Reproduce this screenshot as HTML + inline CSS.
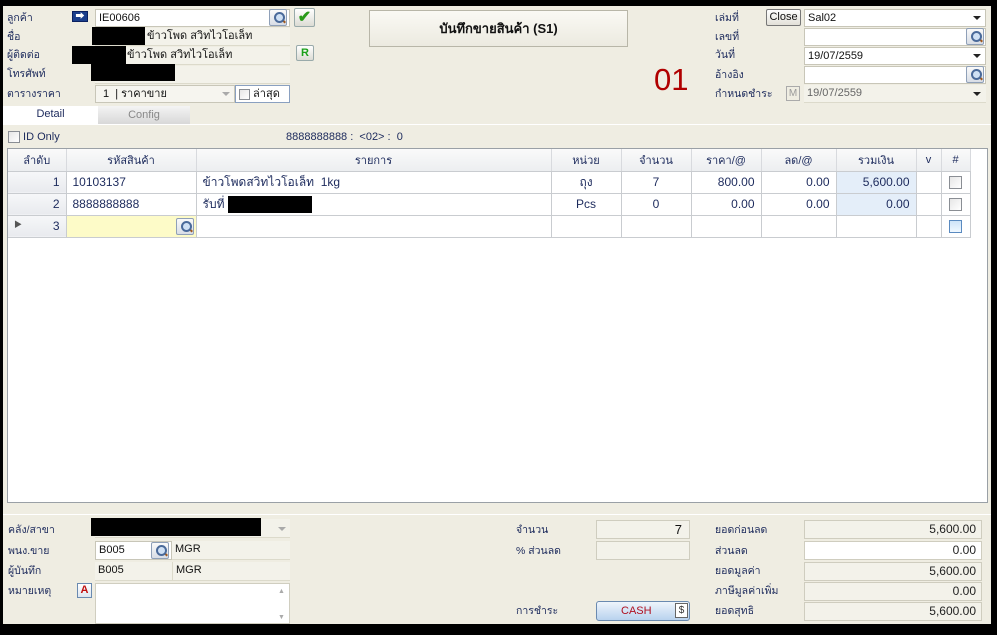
<!DOCTYPE html>
<html><head><meta charset="utf-8"><style>
*{margin:0;padding:0;box-sizing:border-box}
body{width:997px;height:635px;background:#000;position:relative;overflow:hidden;font-family:Tahoma,"Liberation Sans","Noto Sans CJK SC",sans-serif;font-size:11px;color:#1c2a5c}
.a{position:absolute}
#f{position:absolute;left:3px;top:6px;width:988px;height:618px;background:#efede2}
.lb{position:absolute;font-size:10.5px;color:#1c2a5c;white-space:nowrap;line-height:13px}
.in{position:absolute;background:#f3f2ea;border-bottom:1px solid #dcdacb;color:#111;font-size:11px;padding-left:3px;line-height:17px;white-space:nowrap}
.w{background:#fff;border:1px solid #c8c6b8}
.blk{position:absolute;background:#000}
.mag{position:absolute;width:18px;height:17px;border:1px solid #8fa0b8;border-radius:2px;background:linear-gradient(#fafafa,#d8dde6)}
.mag:after{content:"";position:absolute;left:4px;top:2px;width:7px;height:7px;border:2px solid #4a6a9a;border-radius:50%;background:#cfe0f4}
.mag:before{content:"";position:absolute;left:11px;top:10px;width:5px;height:2px;background:#a05a20;transform:rotate(45deg)}
.dd{position:absolute;width:0;height:0;border-left:4px solid transparent;border-right:4px solid transparent;border-top:4px solid #222}
table{border-collapse:collapse}
#g{position:absolute;left:7px;top:148px;width:981px;height:355px;background:#fff;border:1px solid #9aa0a6}
#g td{border-right:1px solid #c9ccd0;border-bottom:1px solid #c9ccd0;height:22px;font-size:12px;color:#1c2a5c;padding:0 6px;white-space:nowrap}
#g tr.h td{height:22px;font-size:11px;text-align:center;background:linear-gradient(#fafafa,#eceef0);border-right:1px solid #d8dade}
.r{text-align:right}.c{text-align:center}
.cb{display:inline-block;width:13px;height:13px;border:1px solid #8a8e94;background:linear-gradient(135deg,#e6e6e6,#fff);vertical-align:middle}
.tot{position:absolute;left:804px;width:178px;height:19px;border:1px solid #cfcdbf;background:#f3f2ea;text-align:right;padding-right:5px;font-size:12px;line-height:17px;color:#222}
</style></head><body>
<div id="f"></div>
<div class="lb" style="left:7px;top:12px">ลูกค้า</div>
<div class="lb" style="left:7px;top:31px">ชื่อ</div>
<div class="lb" style="left:7px;top:49px">ผู้ติดต่อ</div>
<div class="lb" style="left:7px;top:68px">โทรศัพท์</div>
<div class="lb" style="left:7px;top:88px">ตารางราคา</div>
<div class="a" style="left:72px;top:11px;width:16px;height:11px;background:#1b3f8c;border:1px solid #0a2060;color:#fff;font-size:9px;line-height:9px;text-align:center;font-weight:bold">➡</div>
<div class="in w" style="left:95px;top:9px;width:195px;height:18px;line-height:16px">IE00606</div>
<div class="mag" style="left:269px;top:9px"></div>
<div class="a" style="left:294px;top:8px;width:21px;height:19px;border:1px solid #9aa;border-radius:2px;background:linear-gradient(#fff,#dcdcd4);color:#2a9a1a;font-size:16px;line-height:17px;text-align:center;font-weight:bold">✔</div>
<div class="in" style="left:95px;top:28px;width:195px;height:18px;padding-left:52px">ข้าวโพด สวิทไวโอเล็ท</div>
<div class="blk" style="left:92px;top:27px;width:53px;height:18px"></div>
<div class="in" style="left:95px;top:47px;width:195px;height:18px;padding-left:32px">ข้าวโพด สวิทไวโอเล็ท</div>
<div class="blk" style="left:72px;top:46px;width:54px;height:18px"></div>
<div class="a" style="left:296px;top:45px;width:18px;height:16px;border:1px solid #9aa;border-radius:2px;background:linear-gradient(#fff,#dcdcd4);color:#1aa01a;font-size:11px;font-weight:bold;line-height:14px;text-align:center">R</div>
<div class="in" style="left:95px;top:66px;width:195px;height:18px"></div>
<div class="blk" style="left:91px;top:64px;width:84px;height:17px"></div>
<div class="in w" style="left:95px;top:85px;width:140px;height:18px;line-height:16px;padding-left:7px;background:#f6f5ef">1 &nbsp;| ราคาขาย</div>
<div class="dd" style="left:222px;top:92px;border-top-color:#aaa"></div>
<div class="in w" style="left:235px;top:85px;width:55px;height:18px;line-height:16px;border-color:#8aa0c0;background:#fff"><span class="cb" style="width:11px;height:11px"></span> ล่าสุด</div>
<div class="a" style="left:369px;top:10px;width:259px;height:37px;border:1px solid #b8b6a8;background:linear-gradient(#faf9f4,#eceae0);text-align:center;line-height:35px;font-size:13px;font-weight:bold;color:#111">บันทึกขายสินค้า (S1)</div>
<div class="a" style="left:654px;top:62px;font-size:31px;color:#b00000;font-family:'Liberation Sans',sans-serif">01</div>
<div class="lb" style="left:715px;top:12px">เล่มที่</div>
<div class="lb" style="left:715px;top:31px">เลขที่</div>
<div class="lb" style="left:715px;top:49px">วันที่</div>
<div class="lb" style="left:715px;top:69px">อ้างอิง</div>
<div class="lb" style="left:715px;top:88px">กำหนดชำระ</div>
<div class="a" style="left:766px;top:9px;width:35px;height:17px;border:1px solid #777;border-radius:2px;background:linear-gradient(#fff,#e2e0d8);font-size:11px;text-align:center;line-height:15px;color:#111">Close</div>
<div class="in w" style="left:804px;top:9px;width:182px;height:18px;line-height:16px">Sal02</div><div class="dd" style="left:973px;top:16px"></div>
<div class="in w" style="left:804px;top:28px;width:182px;height:18px"></div><div class="mag" style="left:966px;top:28px"></div>
<div class="in w" style="left:804px;top:47px;width:182px;height:18px;line-height:16px">19/07/2559</div><div class="dd" style="left:973px;top:54px"></div>
<div class="in w" style="left:804px;top:66px;width:182px;height:18px"></div><div class="mag" style="left:966px;top:66px"></div>
<div class="a" style="left:786px;top:86px;width:14px;height:15px;border:1px solid #aaa;color:#999;font-size:10px;text-align:center;line-height:13px">M</div>
<div class="in" style="left:804px;top:85px;width:182px;height:18px;color:#666">19/07/2559</div><div class="dd" style="left:973px;top:92px"></div>
<div class="a" style="left:3px;top:106px;width:95px;height:19px;background:#fff;text-align:center;line-height:17px;color:#1c2a5c">Detail</div>
<div class="a" style="left:98px;top:106px;width:92px;height:18px;background:linear-gradient(#f4f4f4,#d8d8d8);text-align:center;line-height:18px;color:#888">Config</div>
<div class="a" style="left:3px;top:124px;width:988px;height:1px;background:#fff"></div>
<div class="a" style="left:8px;top:131px;font-size:11px;color:#1c2a5c"><span class="cb" style="width:12px;height:12px"></span> ID Only</div>
<div class="a" style="left:286px;top:131px;font-size:11px;color:#1c2a5c">8888888888 : &nbsp;&lt;02&gt; : &nbsp;0</div>
<div id="g"><table style="width:962px;table-layout:fixed">
<colgroup><col style="width:58px"><col style="width:130px"><col style="width:355px"><col style="width:70px"><col style="width:70px"><col style="width:70px"><col style="width:75px"><col style="width:80px"><col style="width:25px"><col style="width:29px"></colgroup>
<tr class="h"><td>ลำดับ</td><td>รหัสสินค้า</td><td>รายการ</td><td>หน่วย</td><td>จำนวน</td><td>ราคา/@</td><td>ลด/@</td><td>รวมเงิน</td><td>v</td><td>#</td></tr>
<tr><td class="r" style="background:linear-gradient(#f6f7f9,#e8eaee)">1</td><td>10103137</td><td>ข้าวโพดสวิทไวโอเล็ท &nbsp;1kg</td><td class="c">ถุง</td><td class="c">7</td><td class="r">800.00</td><td class="r">0.00</td><td class="r" style="background:#e4eef9">5,600.00</td><td></td><td class="c"><span class="cb"></span></td></tr>
<tr><td class="r" style="background:linear-gradient(#f6f7f9,#e8eaee)">2</td><td>8888888888</td><td>รับที่ <span style="display:inline-block;width:84px;height:17px;background:#000;vertical-align:middle"></span></td><td class="c">Pcs</td><td class="c">0</td><td class="r">0.00</td><td class="r">0.00</td><td class="r" style="background:#e4eef9">0.00</td><td></td><td class="c"><span class="cb"></span></td></tr>
<tr><td class="r" style="background:linear-gradient(#f6f7f9,#e8eaee)"><span style="float:left;font-size:8px;color:#555">▶</span>3</td><td style="background:#fdfbc8;position:relative"><span class="mag" style="right:2px;top:2px"></span></td><td></td><td></td><td></td><td></td><td></td><td></td><td></td><td class="c"><span class="cb" style="background:linear-gradient(#cfe4f8,#f0f8ff);border-color:#5a8ac0"></span></td></tr>
</table></div>
<div class="a" style="left:3px;top:514px;width:988px;height:1px;background:#fff"></div>
<div class="lb" style="left:8px;top:524px">คลัง/สาขา</div>
<div class="lb" style="left:8px;top:545px">พนง.ขาย</div>
<div class="lb" style="left:8px;top:565px">ผู้บันทึก</div>
<div class="lb" style="left:8px;top:585px">หมายเหตุ</div>
<div class="in" style="left:95px;top:519px;width:195px;height:19px"></div><div class="dd" style="left:278px;top:527px;border-top-color:#aaa"></div>
<div class="blk" style="left:91px;top:518px;width:170px;height:18px"></div>
<div class="in w" style="left:95px;top:541px;width:77px;height:19px">B005</div><div class="mag" style="left:151px;top:542px"></div>
<div class="in" style="left:172px;top:541px;width:118px;height:19px">MGR</div>
<div class="in" style="left:95px;top:562px;width:77px;height:19px">B005</div>
<div class="in" style="left:172px;top:562px;width:118px;height:19px;border-left:1px solid #dcdacb">MGR</div>
<div class="a" style="left:77px;top:583px;width:15px;height:15px;border:1px solid #6a8ab0;background:linear-gradient(#fff,#dde6f0);color:#c01010;font-weight:bold;font-size:11px;text-align:center;line-height:13px">A</div>
<div class="a" style="left:95px;top:583px;width:195px;height:41px;background:#fff;border:1px solid #d0cec0"></div>
<div class="a" style="left:278px;top:588px;font-size:7px;color:#aaa">▲</div>
<div class="a" style="left:278px;top:614px;font-size:7px;color:#aaa">▼</div>
<div class="lb" style="left:516px;top:524px">จำนวน</div>
<div class="lb" style="left:516px;top:545px">% ส่วนลด</div>
<div class="lb" style="left:516px;top:605px">การชำระ</div>
<div class="a" style="left:596px;top:520px;width:94px;height:19px;border:1px solid #cfcdbf;background:#f3f2ea;text-align:right;padding-right:7px;font-size:13px;line-height:17px;color:#111">7</div>
<div class="a" style="left:596px;top:541px;width:94px;height:19px;border:1px solid #cfcdbf;background:#f3f2ea"></div>
<div class="a" style="left:596px;top:601px;width:94px;height:20px;border:1px solid #6a8ab0;border-radius:3px;background:linear-gradient(#eef5fc,#b8d2ee);color:#b01020;font-size:11px;line-height:18px;padding-left:24px">CASH</div>
<div class="a" style="left:675px;top:603px;width:13px;height:15px;border:1px solid #666;background:#fff;font-size:10px;text-align:center;line-height:13px;color:#333">$</div>
<div class="lb" style="left:715px;top:524px">ยอดก่อนลด</div>
<div class="lb" style="left:715px;top:545px">ส่วนลด</div>
<div class="lb" style="left:715px;top:565px">ยอดมูลค่า</div>
<div class="lb" style="left:715px;top:585px">ภาษีมูลค่าเพิ่ม</div>
<div class="lb" style="left:715px;top:605px">ยอดสุทธิ</div>
<div class="tot" style="top:520px">5,600.00</div>
<div class="tot" style="top:541px;background:#fff">0.00</div>
<div class="tot" style="top:562px">5,600.00</div>
<div class="tot" style="top:582px">0.00</div>
<div class="tot" style="top:602px">5,600.00</div>
</body></html>
